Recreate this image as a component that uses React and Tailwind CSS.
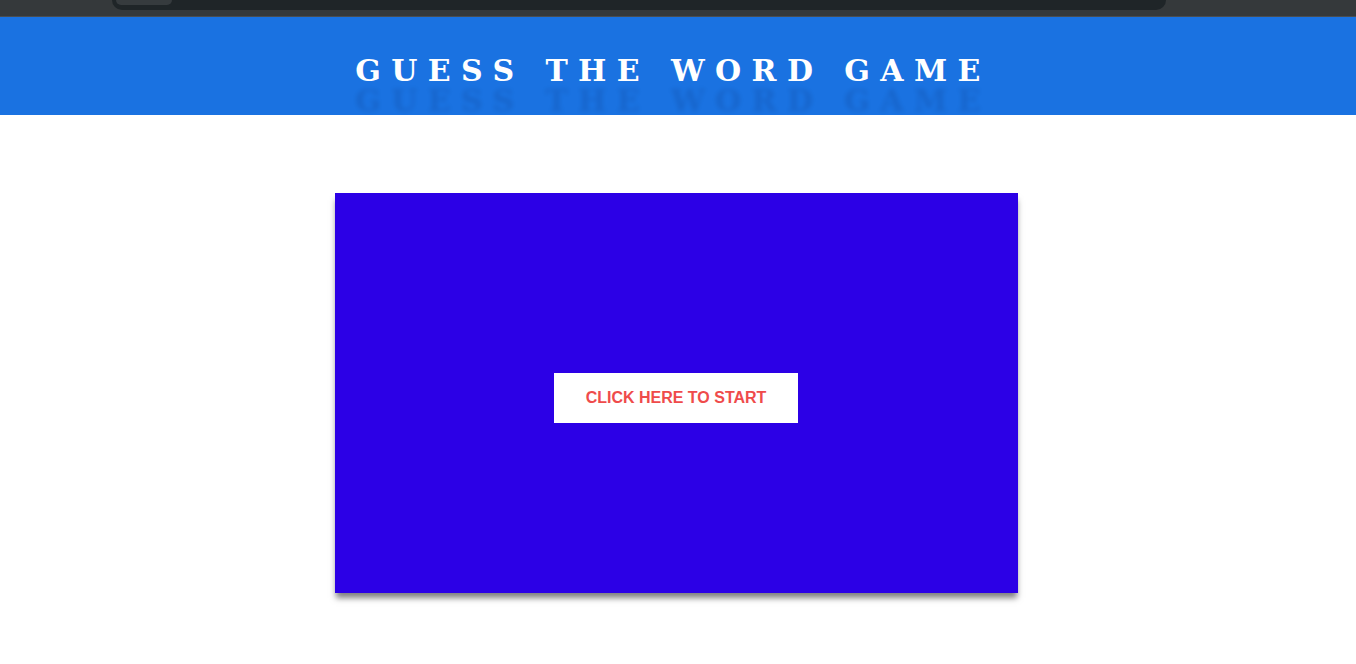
import React from 'react';

const App = () => {
  return (
    <div className="min-h-[664px] bg-white" style={{ fontFamily: '"Liberation Sans", Arial, sans-serif' }}>
      {/* browser chrome strip */}
      <div className="h-[17px] bg-[#35393b] border-b border-[#4a4e51] flex">
        <div className="ml-[112px] w-[1054px] h-[10px] bg-[#1f2528] rounded-b-[10px] flex">
          <div className="ml-[4px] w-[56px] h-[5px] bg-[#363b3e] rounded-b-[6px]" />
        </div>
      </div>

      <header className="h-[98px] bg-[#1a72e1] flex items-center justify-center pr-[10px]">
        <h1
          className="text-white text-[30px] font-bold tracking-[10.4px] mt-[8px] [text-shadow:0_30px_4px_rgba(0,0,40,0.1)]"
          style={{ fontFamily: '"DejaVu Serif", "Liberation Serif", serif' }}
        >
          GUESS THE WORD GAME
        </h1>
      </header>

      <main className="flex justify-center pt-[78px] pr-[4px]">
        <div className="w-[683px] h-[400px] bg-[#2c00e6] shadow-[0_6px_6px_-1px_rgba(0,0,0,0.5)] flex items-center justify-center">
          <button className="mt-[10px] w-[244px] h-[50px] bg-white text-[#ef4b4b] text-[16px] font-bold uppercase">
            Click here to start
          </button>
        </div>
      </main>
    </div>
  );
};

export default App;
